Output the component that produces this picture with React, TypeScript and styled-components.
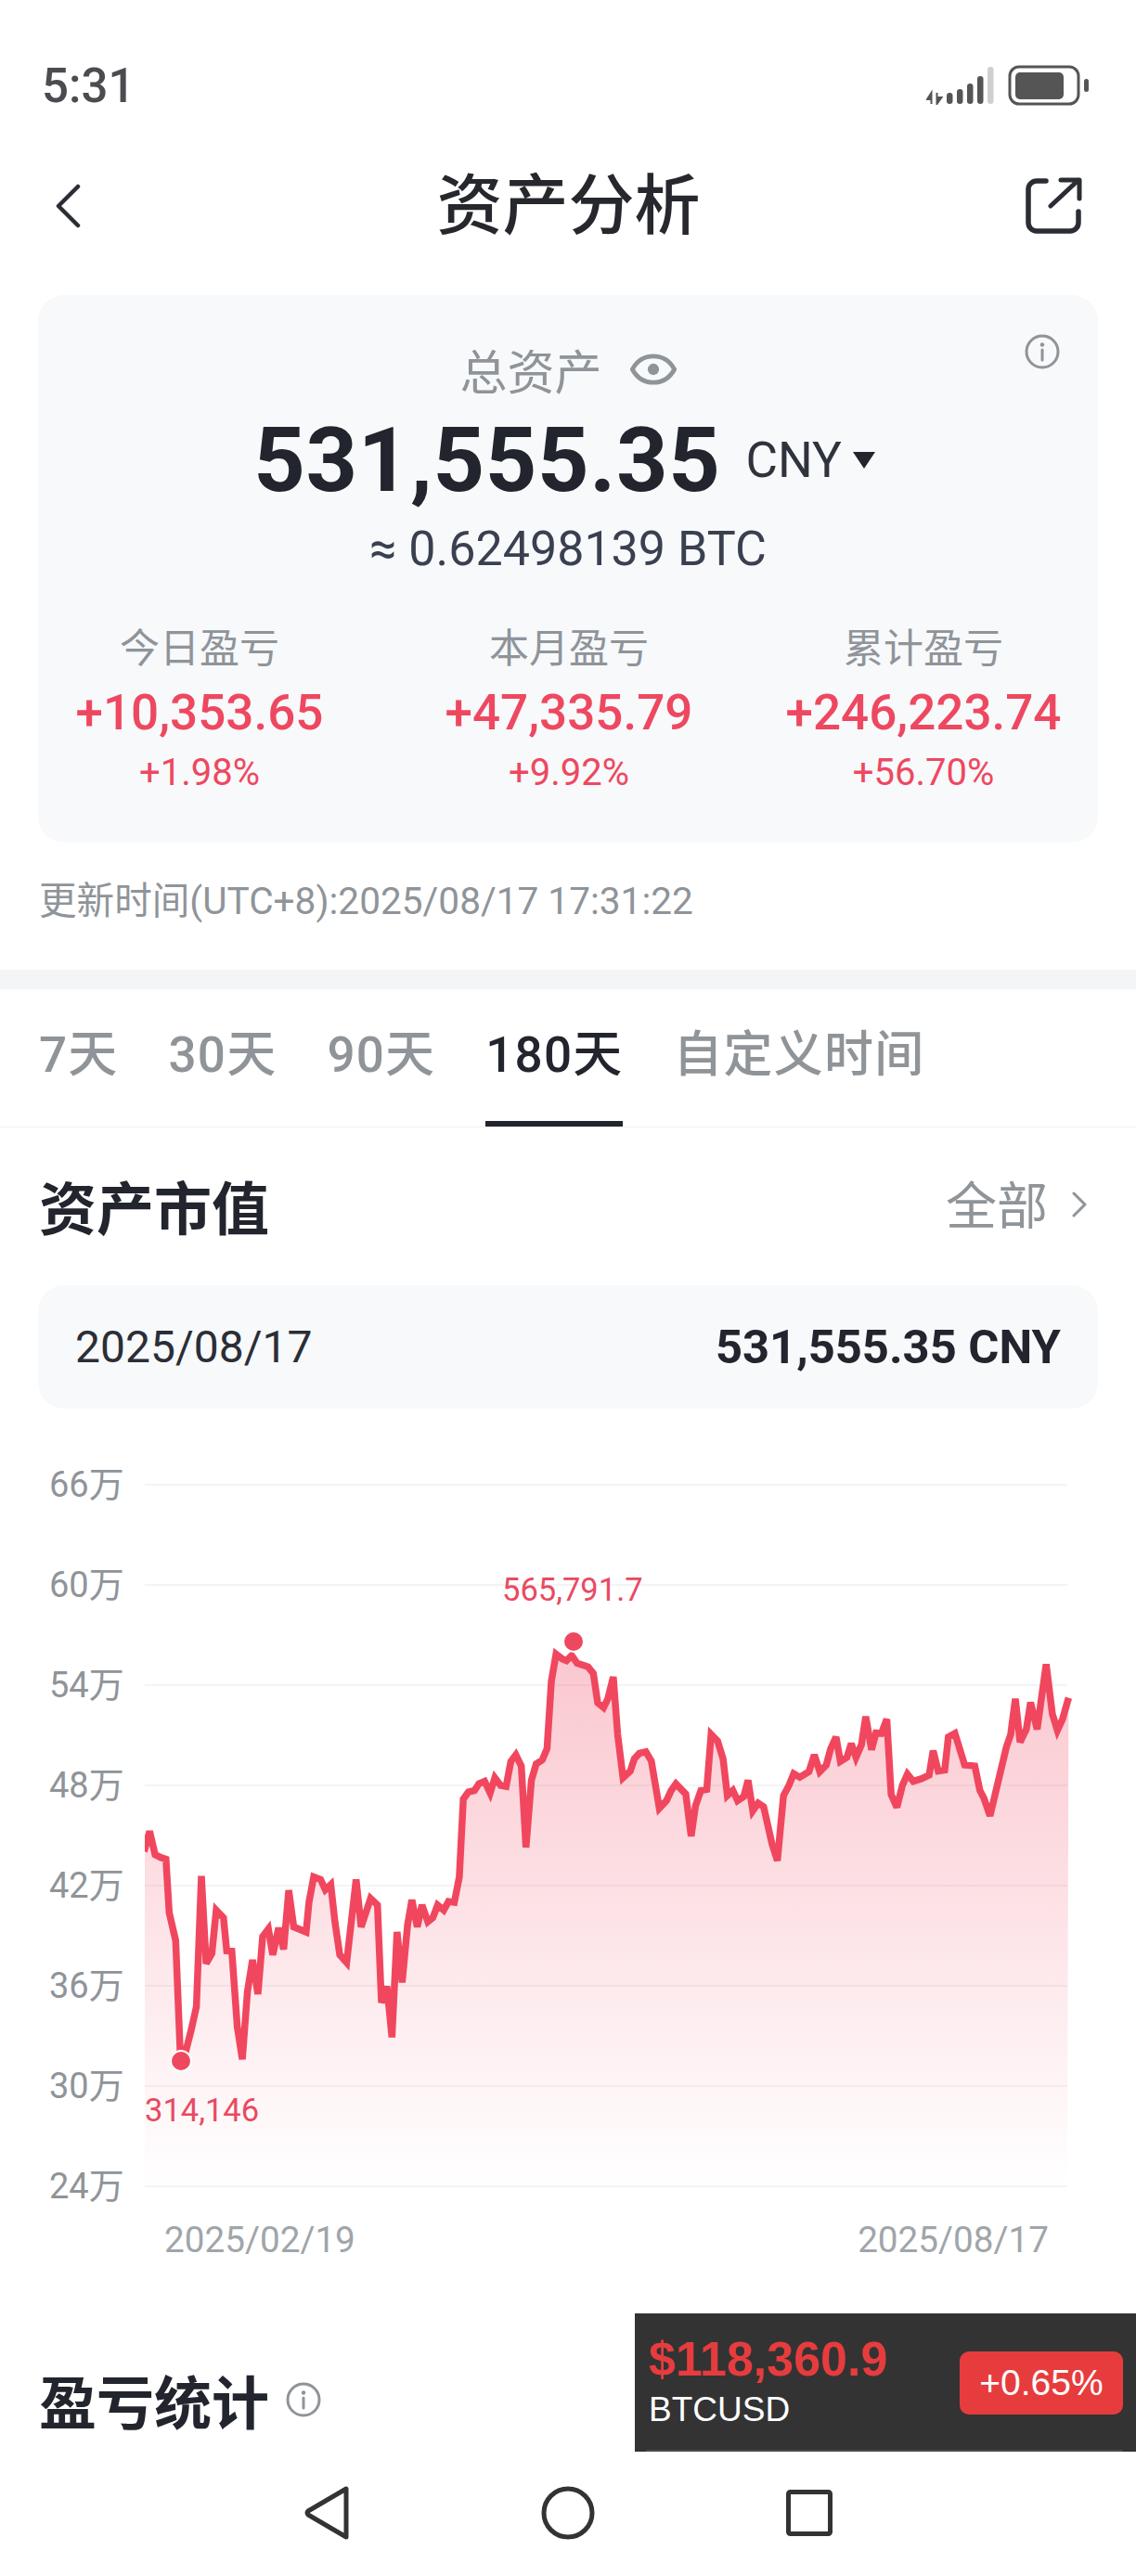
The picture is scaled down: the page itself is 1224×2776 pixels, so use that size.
import React from "react";
import styled, { createGlobalStyle } from "styled-components";

const GlobalStyle = createGlobalStyle`
  html, body {
    margin: 0;
    padding: 0;
    background: #fff;
  }
  * {
    box-sizing: border-box;
  }
`;

const Page = styled.div`
  position: relative;
  width: 1224px;
  height: 2776px;
  overflow: hidden;
  background: #fff;
  color: #22252d;
  font-family: Roboto, "Noto Sans CJK SC", sans-serif;
`;

const StatusBar = styled.div`
  height: 163px;
  padding: 21px 50px 0 45px;
  display: flex;
  align-items: center;
  justify-content: space-between;
`;

const StatusTime = styled.div`
  font-size: 51px;
  font-weight: 500;
  color: #4a4c50;
`;

const StatusIcons = styled.div`
  display: flex;
  align-items: center;
  gap: 14px;
`;

const Header = styled.div`
  height: 118px;
  padding: 0 57px 0 58px;
  display: grid;
  grid-template-columns: 1fr auto 1fr;
  align-items: center;

  & > svg:last-child {
    justify-self: end;
  }
`;

const HeaderTitle = styled.div`
  font-size: 71px;
  font-weight: 500;
  line-height: 90px;
  color: #26282e;
`;

const Card = styled.div`
  position: relative;
  margin: 37px 41px 0;
  height: 590px;
  padding-top: 50px;
  border-radius: 28px;
  background: #f7f9fb;
`;

const InfoSpot = styled.div`
  position: absolute;
  top: 42px;
  right: 41px;
  display: flex;
`;

const TotalLine = styled.div`
  height: 60px;
  display: flex;
  align-items: center;
  justify-content: center;
  gap: 30px;
  font-size: 51px;
  color: #8f9499;
`;

const AmountLine = styled.div`
  height: 130px;
  padding: 5px 8px 0 0;
  display: flex;
  align-items: center;
  justify-content: center;
`;

const Amount = styled.span`
  font-size: 97px;
  font-weight: 700;
  letter-spacing: 0.6px;
  color: #22252d;
`;

const Currency = styled.span`
  margin-left: 27px;
  font-size: 53px;
  color: #2f333c;
`;

const CurrencyCaret = styled.span`
  margin-left: 12px;
  width: 0;
  height: 0;
  border-left: 12px solid transparent;
  border-right: 12px solid transparent;
  border-top: 18px solid #22252d;
`;

const BtcLine = styled.div`
  height: 68px;
  line-height: 68px;
  text-align: center;
  font-size: 52px;
  color: #3a4050;
`;

const StatGrid = styled.div`
  margin-top: 43px;
  display: grid;
  grid-template-columns: 348px 448px 316px;
`;

const StatCol = styled.div`
  display: flex;
  flex-direction: column;
  align-items: center;
`;

const StatLabel = styled.div`
  height: 60px;
  line-height: 60px;
  font-size: 43px;
  color: #8f9499;
`;

const StatValue = styled.div`
  height: 78px;
  line-height: 78px;
  font-size: 53px;
  font-weight: 500;
  color: #ee4860;
`;

const StatPercent = styled.div`
  height: 52px;
  line-height: 52px;
  font-size: 40px;
  color: #ee4860;
`;

const UpdatedAt = styled.div`
  margin: 33px 0 0 42px;
  height: 60px;
  line-height: 60px;
  font-size: 40.6px;
  color: #8f9499;
`;

const Band = styled.div`
  margin-top: 44px;
  height: 21px;
  background: #f4f5f7;
`;

const Tabs = styled.div`
  height: 149px;
  padding-left: 42px;
  display: flex;
  gap: 54px;
  border-bottom: 1px solid #eeeff1;
`;

const Tab = styled.div<{ $active?: boolean }>`
  height: 148px;
  padding-top: 41px;
  line-height: 60px;
  font-size: 53px;
  letter-spacing: 1.2px;
  font-weight: 500;
  color: ${(p) => (p.$active ? "#22252d" : "#8f9499")};
  border-bottom: 6px solid ${(p) => (p.$active ? "#22252d" : "transparent")};
`;

const SectionRow = styled.div<{ $top: number }>`
  margin-top: ${(p) => p.$top}px;
  height: 90px;
  padding: 0 53px 0 42px;
  display: flex;
  align-items: center;
  justify-content: space-between;
`;

const SectionTitle = styled.div`
  font-size: 62px;
  font-weight: 700;
  color: #22252d;
`;

const SectionLink = styled.div`
  display: flex;
  align-items: center;
  gap: 26px;
  margin-bottom: 8px;
  font-size: 55px;
  color: #8f9499;

  & > svg {
    margin-top: 6px;
  }
`;

const TitleGroup = styled.div`
  display: flex;
  align-items: center;
  gap: 18px;
`;

const DateBar = styled.div`
  margin: 41px 41px 0;
  height: 133px;
  padding: 0 40px;
  display: flex;
  align-items: center;
  justify-content: space-between;
  border-radius: 28px;
  background: #f7f9fb;
  font-size: 48px;
  color: #2b2e36;
`;

const DateBarValue = styled.span`
  font-weight: 700;
  font-size: 50.7px;
  color: #22252d;
`;

const ChartRow = styled.div`
  position: relative;
  margin-top: 52px;
  height: 816px;
  padding-left: 53px;
  display: flex;
`;

const YAxis = styled.div`
  width: 103px;
  display: flex;
  flex-direction: column;
  justify-content: space-between;
`;

const YTick = styled.div`
  height: 60px;
  line-height: 60px;
  font-size: 38px;
  color: #8f9499;
`;

const PointLabel = styled.div<{ $left: number; $top: number }>`
  position: absolute;
  left: ${(p) => p.$left}px;
  top: ${(p) => p.$top}px;
  line-height: 40px;
  font-size: 34.5px;
  color: #e84a62;
`;

const XAxis = styled.div`
  margin-top: -2px;
  height: 60px;
  padding: 0 94px 0 177px;
  display: flex;
  justify-content: space-between;
  line-height: 60px;
  font-size: 38.7px;
  color: #a0a5a9;
`;

const Ticker = styled.div`
  position: absolute;
  left: 684px;
  top: 2493px;
  width: 540px;
  height: 149px;
  padding: 0 14px 0 15px;
  display: flex;
  align-items: center;
  justify-content: space-between;
  background: #333;
  font-family: "Liberation Sans", Arial, sans-serif;

  &::after {
    content: "";
    position: absolute;
    left: 12px;
    right: 14px;
    bottom: 0;
    height: 2px;
    background: #4a4a4a;
  }
`;

const TickerText = styled.div`
  margin-bottom: 4px;
`;

const TickerPrice = styled.div`
  margin-bottom: 3px;
  font-size: 52px;
  line-height: 60px;
  font-weight: 700;
  color: #e63c3e;
`;

const TickerPair = styled.div`
  font-size: 37px;
  line-height: 44px;
  color: #fff;
`;

const TickerBadge = styled.div`
  width: 176px;
  height: 68px;
  display: flex;
  align-items: center;
  justify-content: center;
  border-radius: 10px;
  background: #e73c3e;
  color: #fff;
  font-size: 39px;
`;

const NavBar = styled.div`
  margin-top: 17px;
  height: 120px;
  padding-left: 328px;
  display: flex;
  align-items: center;
`;

const NavSlot = styled.div<{ $width: number }>`
  width: ${(p) => p.$width}px;
  display: flex;
`;

// traced from the reference, [x, y] in the crop's own scale
const leftTrace = [
  398,830, 413,790, 428,836, 445,842, 458,845, 467,950, 485,1005, 498,1235, 510,1230, 528,1180, 542,1135,
  556,878, 569,1050, 585,1030, 597,945, 617,960, 626,1025, 640,1026, 655,1175, 669,1238, 683,1105, 697,1043,
  712,1110, 725,997, 741,982, 753,1033, 769,980, 783,1022, 797,906, 811,978, 845,988, 853,930, 866,880, 885,885,
  898,905, 913,895, 925,970, 938,1033, 957,1048, 983,885, 997,978, 1023,922, 1042,935, 1053,1127, 1068,1095,
  1082,1195, 1096,988, 1110,1087, 1125,975, 1137,925, 1152,978, 1165,935, 1181,968, 1195,960, 1208,935, 1225,945,
  1238,928, 1254,930, 1268,880, 1279,727, 1293,713, 1310,710, 1322,697, 1338,692, 1353,715, 1366,685, 1382,700,
  1397,702, 1410,653, 1424,640, 1439,662, 1452,822, 1467,690, 1480,658, 1497,650, 1510,628, 1522,495, 1535,442,
  1553,452,
];

const rightTrace = [
  -4,455, 10,445, 25,460, 55,467, 70,480, 82,538, 98,547, 110,530, 125,487, 137,600, 152,685, 172,672, 183,648,
  197,637, 215,634, 230,652, 252,745, 272,730, 285,710, 298,697, 325,717, 340,800, 352,740, 367,710, 383,708,
  395,600, 413,613, 428,648, 440,720, 455,710, 468,730, 485,722, 497,690, 510,750, 525,735, 540,742, 563,815,
  578,848, 595,720, 610,700, 623,677, 640,684, 665,673, 680,640, 695,673, 713,660, 725,628, 740,605, 752,653,
  770,645, 782,618, 795,645, 810,620, 822,565, 838,630, 850,597, 865,598, 880,570, 892,718, 908,743, 923,700,
  937,678, 953,692, 975,687, 997,680, 1008,632, 1022,672, 1040,670, 1050,605, 1068,598, 1095,660, 1123,662,
  1137,710, 1148,725, 1165,760, 1210,625, 1222,600, 1235,530, 1248,615, 1265,590, 1277,537, 1295,590, 1320,462,
  1337,560, 1351,592, 1365,570, 1382,528,
];

const toPoints = (trace: number[], offsetX: number) => {
  const out: string[] = [];
  for (let i = 0; i < trace.length; i += 2) {
    const x = offsetX + trace[i] / 2.562;
    const y = 1540 + trace[i + 1] / 1.823;
    out.push(`${x.toFixed(1)},${y.toFixed(1)}`);
  }
  return out;
};

const linePoints = [...toPoints(leftTrace, 0), ...toPoints(rightTrace, 612)];
const areaPoints = [...linePoints, "1150,2356", "156,2356"];
const gridY = [1600, 1708, 1816, 1924, 2032, 2140, 2248, 2356];
const yTicks = ["66万", "60万", "54万", "48万", "42万", "36万", "30万", "24万"];

const stats = [
  { label: "今日盈亏", value: "+10,353.65", percent: "+1.98%" },
  { label: "本月盈亏", value: "+47,335.79", percent: "+9.92%" },
  { label: "累计盈亏", value: "+246,223.74", percent: "+56.70%" },
];

const tabs = ["7天", "30天", "90天", "180天", "自定义时间"];

const InfoIcon = ({ color = "#8f9499" }: { color?: string }) => (
  <svg width="38" height="38" viewBox="0 0 38 38" fill="none">
    <circle cx="19" cy="19" r="17" stroke={color} strokeWidth="3" />
    <circle cx="19" cy="11.5" r="2.2" fill={color} />
    <path d="M19 17v11" stroke={color} strokeWidth="3" strokeLinecap="round" />
  </svg>
);

const App = () => {
  return (
    <Page>
      <GlobalStyle />
      <StatusBar>
        <StatusTime>5:31</StatusTime>
        <StatusIcons>
          <svg width="74" height="42" viewBox="0 0 74 42" fill="none">
            <path d="M5.5 41V29L1 36h4.5" fill="#555" stroke="#555" strokeWidth="2" />
            <path d="M11.5 29v12l5-7h-5" fill="#555" stroke="#555" strokeWidth="2" />
            <rect x="22" y="29" width="6.5" height="12" rx="3.2" fill="#555" />
            <rect x="33" y="25" width="6.5" height="16" rx="3.2" fill="#555" />
            <rect x="44" y="19" width="6.5" height="22" rx="3.2" fill="#555" />
            <rect x="55" y="11" width="6.5" height="30" rx="3.2" fill="#555" />
            <rect x="66" y="1" width="6.5" height="40" rx="3.2" fill="#cfcfcf" />
          </svg>
          <svg width="88" height="44" viewBox="0 0 88 44" fill="none">
            <rect x="2" y="2" width="74" height="40" rx="10" stroke="#555" strokeWidth="3" />
            <rect x="8" y="8" width="52" height="29" rx="5" fill="#555" />
            <rect x="82" y="15" width="5" height="14" rx="2.5" fill="#555" />
          </svg>
        </StatusIcons>
      </StatusBar>

      <Header>
        <svg width="30" height="48" viewBox="0 0 30 48" fill="none">
          <path d="M26 3L5 24l21 21" stroke="#2a2d34" strokeWidth="4.5" strokeLinecap="round" strokeLinejoin="round" />
        </svg>
        <HeaderTitle>资产分析</HeaderTitle>
        <svg width="62" height="62" viewBox="0 0 62 62" fill="none">
          <path
            d="M22 4H12a9 9 0 0 0-9 9v36a9 9 0 0 0 9 9h36a9 9 0 0 0 9-9V37"
            stroke="#2a2d34"
            strokeWidth="5.5"
            strokeLinecap="round"
          />
          <path d="M27 31L57 3M38 3h20v20" stroke="#2a2d34" strokeWidth="5" strokeLinecap="round" strokeLinejoin="round" />
        </svg>
      </Header>

      <Card>
        <InfoSpot>
          <InfoIcon />
        </InfoSpot>
        <TotalLine>
          <span>总资产</span>
          <svg width="50" height="34" viewBox="0 0 52 36" fill="none">
            <path d="M2 18C8 7 16 3 26 3s18 4 24 15c-6 11-14 15-24 15S8 29 2 18z" stroke="#8f9499" strokeWidth="5" />
            <circle cx="26" cy="18" r="6.5" fill="#8f9499" />
          </svg>
        </TotalLine>
        <AmountLine>
          <Amount>531,555.35</Amount>
          <Currency>CNY</Currency>
          <CurrencyCaret />
        </AmountLine>
        <BtcLine>≈ 0.62498139 BTC</BtcLine>
        <StatGrid>
          {stats.map((s) => (
            <StatCol key={s.label}>
              <StatLabel>{s.label}</StatLabel>
              <StatValue>{s.value}</StatValue>
              <StatPercent>{s.percent}</StatPercent>
            </StatCol>
          ))}
        </StatGrid>
      </Card>

      <UpdatedAt>更新时间(UTC+8):2025/08/17 17:31:22</UpdatedAt>
      <Band />

      <Tabs>
        {tabs.map((t) => (
          <Tab key={t} $active={t === "180天"}>
            {t}
          </Tab>
        ))}
      </Tabs>

      <SectionRow $top={39}>
        <SectionTitle>资产市值</SectionTitle>
        <SectionLink>
          全部
          <svg width="16" height="28" viewBox="0 0 16 28" fill="none">
            <path d="M2 2l12 12L2 26" stroke="#8f9499" strokeWidth="3" strokeLinecap="round" strokeLinejoin="round" />
          </svg>
        </SectionLink>
      </SectionRow>

      <DateBar>
        <span>2025/08/17</span>
        <DateBarValue>531,555.35 CNY</DateBarValue>
      </DateBar>

      <ChartRow>
        <YAxis>
          {yTicks.map((t) => (
            <YTick key={t}>{t}</YTick>
          ))}
        </YAxis>
        <svg width="1000" height="816" viewBox="156 1570 1000 816" fill="none">
          <defs>
            <linearGradient id="area" gradientUnits="userSpaceOnUse" x1="0" y1="1770" x2="0" y2="2356">
              <stop offset="0" stopColor="#ee3350" stopOpacity="0.28" />
              <stop offset="1" stopColor="#ee3350" stopOpacity="0" />
            </linearGradient>
          </defs>
          {gridY.map((y) => (
            <line key={y} x1="156" x2="1150" y1={y} y2={y} stroke="#f3f4f6" strokeWidth="2" />
          ))}
          <polygon points={areaPoints.join(" ")} fill="url(#area)" />
          <polyline points={linePoints.join(" ")} stroke="#f0475f" strokeWidth="7.5" strokeLinejoin="miter" strokeMiterlimit="3" />
          <circle cx="195" cy="2221" r="11" fill="#ee4860" stroke="#fff" strokeWidth="2" />
          <circle cx="618" cy="1769" r="11" fill="#ee4860" stroke="#fff" strokeWidth="2" />
        </svg>
        <PointLabel $left={541} $top={123}>565,791.7</PointLabel>
        <PointLabel $left={156} $top={684}>314,146</PointLabel>
      </ChartRow>

      <XAxis>
        <span>2025/02/19</span>
        <span>2025/08/17</span>
      </XAxis>

      <SectionRow $top={97}>
        <TitleGroup>
          <SectionTitle>盈亏统计</SectionTitle>
          <InfoIcon />
        </TitleGroup>
      </SectionRow>

      <NavBar>
        <NavSlot $width={255}>
          <svg width="48" height="58" viewBox="0 0 48 58" fill="none">
            <path d="M45 3v52L4 31a3 3 0 0 1 0-4L45 3z" stroke="#333" strokeWidth="5" strokeLinejoin="round" />
          </svg>
        </NavSlot>
        <NavSlot $width={264}>
          <svg width="58" height="58" viewBox="0 0 58 58" fill="none">
            <circle cx="29" cy="29" r="26" stroke="#333" strokeWidth="5" />
          </svg>
        </NavSlot>
        <NavSlot $width={60}>
          <svg width="50" height="50" viewBox="0 0 50 50" fill="none">
            <rect x="2.5" y="2.5" width="45" height="45" rx="2" stroke="#333" strokeWidth="5" />
          </svg>
        </NavSlot>
      </NavBar>

      <Ticker>
        <TickerText>
          <TickerPrice>$118,360.9</TickerPrice>
          <TickerPair>BTCUSD</TickerPair>
        </TickerText>
        <TickerBadge>+0.65%</TickerBadge>
      </Ticker>
    </Page>
  );
};

export default App;
